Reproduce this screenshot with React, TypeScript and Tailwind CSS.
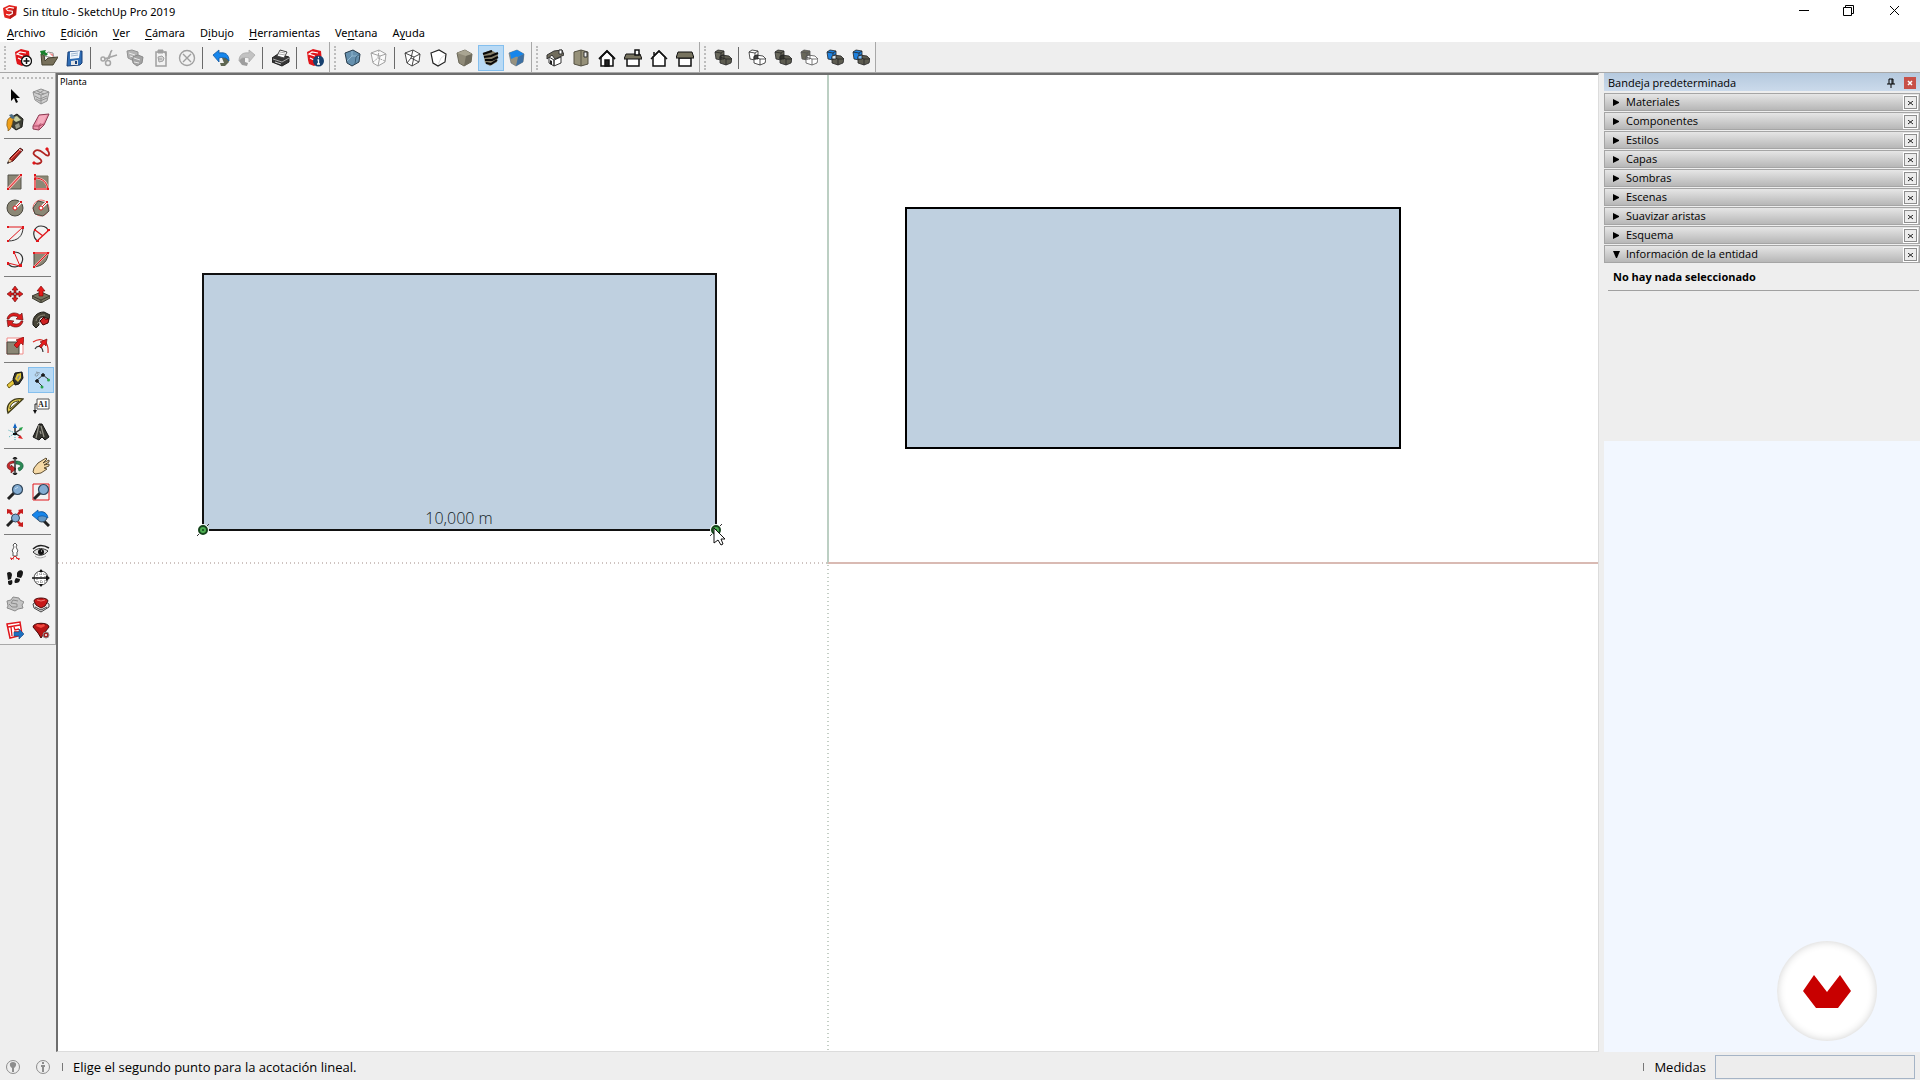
import React, { useState } from 'react';

const RED = '#e0161b';
const DARK = '#262626';
const OLIVE = '#8b8775';
const BLUE = '#1e82e0';

const CUBE = '1,4 9,1 16,5 15,13 8,17 3,14';

const Glyph = ({ children, size = 18 }) => (
  <svg width={size} height={size} viewBox="0 0 18 18" fill="none" aria-hidden="true">
    {children}
  </svg>
);

const Logo = () => (
  <g>
    <path d="M0 4l8-4 10 2-1 11-8 5-7-2-1-4z" fill="#e3241f" />
    <path d="M17 3l-1 10-7 5V8z" fill="#b91a17" />
    <path d="M14 4L8 3 4 5l2 2 6 1v3l-4 2-4-1" stroke="#fff" strokeWidth="1.4" />
  </g>
);

// two overlapping blocks, shared by the solid tools
const Solids = ({ back, front, line = DARK, core = 'none' }) => (
  <g stroke={line} strokeWidth=".8" strokeLinejoin="round">
    <path d="M1 3l3-2 6 1v8l-3 1-5-1z" fill={back} />
    <path d="M6 8l2-2 7 1 3 3-1 4-5 2-6-2z" fill={front} />
    <path d="M1 3l6 1v7M7 4l3-2M6 8l6 2v6M12 10l6 0" />
    <path d="M6 7l4-1v4l-4 0z" fill={core} />
  </g>
);

const House = ({ children }) => (
  <g stroke="#111" strokeWidth="1.5" strokeLinejoin="miter">{children}</g>
);

const icons = {
  nuevo: (
    <>
      <path d="M1 3l6-3 8 2 1 11-8 4-5-2-1-4z" fill={RED} />
      <path d="M12 4L6 3 3 5l6 2M4 9l4 2" stroke="#fff" strokeWidth="1.2" />
      <circle cx="12.5" cy="12" r="5" fill="#fff" stroke="#111" strokeWidth="1.3" />
      <path d="M12.5 9v6M9.5 12h6" stroke="#111" strokeWidth="1.5" />
    </>
  ),
  abrir: (
    <>
      <path d="M4 7l4-4 5 1 1 5z" fill="#fff" stroke="#999" />
      <path d="M9 4l4 1v3z" fill="#ee8c8c" />
      <path d="M1 5l1 11 11 0 5-8-10 1-3 3-1-6z" fill="#77705b" stroke="#45412f" />
      <path d="M0 2l6-1-1 2 3 2-2 2-3-2-1 2z" fill="#18812d" />
    </>
  ),
  guardar: (
    <>
      <path d="M2 3l14-1v12l-2 2L1 17z" fill="#2f6db5" stroke="#173f78" />
      <path d="M4 3l10-1-1 7-9 1z" fill="#f1f6fc" />
      <path d="M5 5l7-1M5 7l7-1" stroke="#9fb7d0" />
      <path d="M5 12l7-1v5l-7 0z" fill="#e4e4e4" />
      <path d="M9 12h2v3H9z" fill="#173f78" />
    </>
  ),
  cortar: (
    <g stroke="#a6a6a6" strokeWidth="1.5">
      <path d="M12 1L7 11M17 6L4 10M11 2l-2 8" />
      <circle cx="3" cy="10" r="2" />
      <circle cx="8" cy="14" r="2.5" />
    </g>
  ),
  copiar: (
    <>
      <path d="M1 2l5-1 6 2v5l-4 4-6-3z" fill="#b3b3b3" stroke="#929292" />
      <path d="M6 8l6-2 5 2-1 6-5 3-4-3z" fill="#a3a3a3" stroke="#8b8b8b" />
      <path d="M3 4l6 2M8 9l6 2M8 13l5 1M4 7l3 1" stroke="#e8e8e8" />
    </>
  ),
  pegar: (
    <g stroke="#a0a0a0">
      <path d="M4 3h10v14H4z" strokeWidth="1.5" />
      <path d="M6 1h5v3H6zM12 3h2v4" fill="#a0a0a0" />
      <path d="M6 8l4-1 2 2-1 3-4 1zM6 10l4 0" fill="#d6d6d6" />
    </g>
  ),
  borrar: (
    <g stroke="#a0a0a0" strokeWidth="1.4">
      <circle cx="9" cy="9" r="7.5" />
      <path d="M5 5l8 8M13 5l-8 8" />
    </g>
  ),
  deshacer: (
    <>
      <path d="M10 9l6 0 1 4-4 4-4 0-1-3 4 0z" fill="#5e6652" />
      <path d="M1 6l6-5v3c6-1 10 1 10 8-3-4-6-4-10-3v4z" fill="#1686ec" stroke="#0f579f" strokeWidth=".8" />
    </>
  ),
  rehacer: (
    <>
      <path d="M2 9l5 0 0 4 3 1-1 3-5-1-3-4z" fill="#9d9d9d" />
      <path d="M17 6l-6-5v3C5 3 1 6 1 12c3-4 6-4 10-3v4z" fill="#c2c2c2" stroke="#a9a9a9" strokeWidth=".8" />
    </>
  ),
  imprimir: (
    <>
      <path d="M0 9l6-4 11 3v5l-7 4-10-4z" fill="#363636" stroke="#1d1d1d" />
      <path d="M5 7l3-6 7 2-3 6z" fill="#fff" stroke="#444" />
      <path d="M7 5l6 1M8 3l5 1" stroke="#aaa" />
      <path d="M1 10l9 3 7-4" stroke="#aaa" />
      <path d="M3 13l6 2" stroke="#ccc" />
    </>
  ),
  info: (
    <>
      <path d="M1 3l6-3 8 2 1 11-8 4-5-2-1-4z" fill={RED} />
      <path d="M12 4L6 3 3 5l6 2M4 9l4 2" stroke="#fff" strokeWidth="1.2" />
      <circle cx="12.5" cy="12" r="5.5" fill="#17416f" />
      <path d="M11.500 11h1v4M11 15h3M12 8.500h1" stroke="#fff" strokeWidth="1.3" />
    </>
  ),
  rayosX: (
    <>
      <polygon points={CUBE} fill="#6590ae" stroke="#263b4b" />
      <path d="M3 12l5-5 7 0M8 2v5" stroke="#8fb6cf" />
      <path d="M12 8l4-3M12 8l-1 7" stroke="#3c6079" />
    </>
  ),
  aristas: (
    <g stroke="#a2a2a2">
      <polygon points={CUBE} fill="#fafafa" />
      <path d="M1 4l9 3 6-2M10 7l-2 10" />
      <path d="M3 13l5-4 7 3M9 1L8 9" strokeDasharray="2 1" />
    </g>
  ),
  alambre: (
    <g stroke="#333" strokeWidth=".9">
      <polygon points={CUBE} fill="#fff" />
      <path d="M1 4l9 4 6-3M10 8l-2 9M3 14l4-5 8 4M9 1L7 9" />
    </g>
  ),
  ocultas: (
    <>
      <polygon points={CUBE} fill="#fff" stroke="#222" strokeWidth="1.2" />
      <path d="M15 6l-4 3-3 7" stroke="#ddd" />
    </>
  ),
  sombreado: (
    <>
      <polygon points={CUBE} fill="#8f8a78" stroke="#6b6859" />
      <path d="M1 4l9 3 6-2-7-4z" fill="#a9a592" />
      <path d="M10 7l6-2-1 8-7 4z" fill="#6f6b5c" />
    </>
  ),
  texturas: (
    <>
      <polygon points={CUBE} fill="#847e68" />
      <path d="M1 5l9-3M2 8l7-1 7-3M3 11l7 0 6-3M4 14l5 1 6-4" stroke="#080808" strokeWidth="2" />
    </>
  ),
  mono: (
    <>
      <polygon points={CUBE} fill="#96917f" stroke="#5d6a74" strokeWidth=".6" />
      <path d="M1 4l8-3 7 4-6 3z" fill="#1686ec" />
      <path d="M2 4l12 1-11 5z" fill="#1686ec" />
      <path d="M10 8l6-3-1 8-7 4z" fill="#3d70a3" />
    </>
  ),
  iso: (
    <>
      <path d="M3 8l5 3v6l-5-3zM8 11l7-3v6l-7 3z" fill="#fff" stroke="#333" />
      <path d="M1 6l7-4 8-1 2 5-9 4-3-4-5 4z" fill="#716d5d" stroke="#333" />
      <path d="M13 1h3v4h-3z" fill="#fff" stroke="#333" />
      <path d="M4 11l2 1v4l-2-1z" fill="#222" />
    </>
  ),
  planta: (
    <>
      <path d="M2 3l7-2 7 2v12l-7 2-7-2z" fill="#969179" stroke="#545143" />
      <path d="M9 1v16" stroke="#545143" />
      <path d="M12 3h3v5h-3z" fill="#f3f3f3" stroke="#333" />
    </>
  ),
  frente: (
    <House>
      <path d="M3 8l6-6 6 6v9H3z" fill="#fff" />
      <path d="M1 10l8-8 8 8" strokeWidth="1.8" />
      <path d="M7 11h4v6H7z" fill="#222" />
    </House>
  ),
  derecha: (
    <House>
      <path d="M3 9h12v8H3z" fill="#fff" />
      <path d="M2 5h14l2 5H0z" fill="#77735f" strokeWidth="1" />
      <path d="M11 1h4v5h-4z" fill="#fff" />
    </House>
  ),
  detras: (
    <House>
      <path d="M3 8l6-6 6 6v9H3z" fill="#fff" />
      <path d="M1 10l8-8 8 8M4 6V3" />
    </House>
  ),
  izquierda: (
    <House>
      <path d="M3 9h12v8H3z" fill="#fff" />
      <path d="M2 3h14l2 6H0z" fill="#77735f" strokeWidth="1" />
    </House>
  ),
  envoltura: <Solids back="#68675a" front="#5d5c50" />,
  interseccion: <Solids back="#fff" front="#fff" core="#444" />,
  union: <Solids back="#68675a" front="#5d5c50" core="#33332c" />,
  sustraer: <Solids back="#68675a" front="#fff" line="#555" />,
  recortar: <Solids back={BLUE} front="#5d5c50" core="#d9e6ef" />,
  dividir: <Solids back={BLUE} front="#5d5c50" core="#7ec0ff" />,

  seleccionar: <path d="M5 2v12l3-3 2 5 2-1-2-4h4z" fill="#050505" />,
  componente: (
    <g stroke="#929292">
      <path d="M1 5l8-3 8 3-2 9-6 3-6-4z" fill="#cfcfcf" />
      <path d="M1 5l8 3 8-3M9 8v9M5 4l7 3M12 3L6 7M3 9l5 3 7-3M4 12l4 2 7-3" />
    </g>
  ),
  pintar: (
    <>
      <path d="M4 5l7-4 6 5-1 8-6 3-5-4z" fill="#3d3f35" stroke="#1c1c17" />
      <path d="M5 5l6-2 4 4-5 2z" fill="#c8cfa0" />
      <path d="M9 12l4-2 1 4-4 2z" fill="#9b9c8c" />
      <path d="M1 10c0-5 4-7 7-5-2 3-1 10-6 13 1-3-2-4-1-8z" fill="#f0a11c" stroke="#7a5514" strokeWidth=".7" />
      <path d="M3 2l3-1 3 4-3 1z" fill="#4a6d85" />
    </>
  ),
  borrador: (
    <>
      <path d="M1 13L7 2l10-1-5 11-5 5-6-1z" fill="#ed8fa8" stroke="#8a3950" />
      <path d="M1 13l6 0 5-2M7 13v4M7 13l6-9" stroke="#a94c65" />
      <path d="M7 3l8-1-4 8-6 1z" fill="#f5adbf" />
    </>
  ),
  linea: (
    <>
      <path d="M2 16l2-5L14 1l3 2L7 14z" fill="#b5231f" stroke="#4d1714" />
      <path d="M2 16l1-4 3 2z" fill="#e5c99c" />
      <path d="M1 17l2-1-1-2z" fill="#111" />
      <path d="M5 12L14 3" stroke="#e77a6c" />
      <path d="M13 2l3 2" stroke="#ddd" />
    </>
  ),
  manoAlzada: (
    <>
      <path d="M2 16c5 2 10-1 6-4s-9-5-5-8 8 2 11 4 4-1 2-4l-1-2" stroke="#b02522" strokeWidth="1.8" />
      <path d="M1 15h2v2H1zM14 1h2v2h-2z" stroke={RED} fill={RED} />
    </>
  ),
  rectangulo: (
    <>
      <path d="M2 2h13v14H2z" fill={OLIVE} stroke="#55534a" />
      <path d="M2 16L15 2" stroke="#f7b4b0" strokeWidth="3" />
      <path d="M2 16L15 2" stroke={RED} />
      <path d="M1 15h2v2H1zM14 1h2v2h-2z" fill={RED} />
    </>
  ),
  rectRotado: (
    <>
      <path d="M3 3h13v13H3z" fill={OLIVE} stroke="#77735f" />
      <path d="M3 2v14h13M3 5c8 0 12 5 13 11" stroke="#fbc3c0" strokeWidth="2" />
      <path d="M3 2v14h13M3 5c8 0 12 5 13 11" stroke={RED} />
      <path d="M2 1h2v2H2zM2 5h2v2H2zM2 15h2v2H2zM15 15h2v2h-2z" fill={RED} />
    </>
  ),
  circulo: (
    <>
      <circle cx="9" cy="9" r="8" fill={OLIVE} stroke="#4a483f" />
      <path d="M9 9l6-6" stroke="#fff" strokeWidth="3" />
      <path d="M9 9l6-6" stroke={RED} />
      <circle cx="9" cy="9" r="2" fill="#fff" stroke={RED} />
      <path d="M14 2h2v2h-2z" fill={RED} />
    </>
  ),
  poligono: (
    <>
      <circle cx="9" cy="9" r="8" stroke="#ef7470" />
      <path d="M1 9l5-7 9 2 2 8-6 5-8-2z" fill={OLIVE} stroke="#4a483f" />
      <path d="M9 9l6-6" stroke="#fff" strokeWidth="3" />
      <path d="M9 9l6-6" stroke={RED} />
      <circle cx="9" cy="9" r="2" fill="#fff" stroke={RED} />
      <path d="M14 2h2v2h-2z" fill={RED} />
    </>
  ),
  arco: (
    <>
      <path d="M17 2c0 9-5 14-15 14" stroke="#333" />
      <path d="M2 2h15L2 16" stroke={RED} />
      <path d="M1 1h2v2H1zM16 1h2v3h-2zM1 15h2v2H1z" fill={RED} />
    </>
  ),
  arco2: (
    <>
      <path d="M5 16C-1 10 2 1 9 1c5 0 7 3 7 5" stroke="#333" strokeWidth="1.2" />
      <path d="M5 16L17 5M3 5l8 6" stroke={RED} strokeWidth="1.3" />
      <path d="M4 15h3v2H4zM15 4h3v2h-3zM2 4h2v2H2z" fill={RED} />
    </>
  ),
  arco3: (
    <>
      <path d="M8 1c7 0 10 5 8 10s-9 7-14 2" stroke="#333" strokeWidth="1.2" />
      <path d="M8 1l6 14M2 12l12 3" stroke={RED} strokeWidth="1" />
      <path d="M7 0h2v3H7zM1 11h2v3H1zM13 13h3v3h-3z" fill={RED} />
    </>
  ),
  sector: (
    <>
      <path d="M2 2h14c0 8-5 13-14 14z" fill={OLIVE} stroke="#4a483f" />
      <path d="M2 2h14L2 16" stroke="#f5aaa6" strokeWidth="2" />
      <path d="M2 2h14L2 16" stroke={RED} />
      <path d="M1 1h2v2H1zM15 1h2v2h-2zM1 15h2v2H1z" fill={RED} />
    </>
  ),
  mover: (
    <g fill="#e51c1c" stroke="#5d0b0b" strokeWidth=".6">
      <path d="M9 1l3 4h-2v3H8V5H6zM9 17l-3-4h2v-3h2v3h2zM1 9l4-3v2h3v2H5v2zM17 9l-4 3v-2h-3V8h3V6z" />
    </g>
  ),
  empujar: (
    <>
      <path d="M0 11l9-4 9 4v2l-9 5-9-5z" fill="#76735f" stroke="#3b3a31" />
      <path d="M0 11l9 4 9-4M9 15v3" stroke="#3b3a31" />
      <path d="M9 1l4 5-2 0v5H7V6H5z" fill="#e51c1c" stroke="#700" strokeWidth=".6" />
    </>
  ),
  rotar: (
    <g fill="#dc1c1c" stroke="#5d0b0b" strokeWidth=".6">
      <path d="M1 8C2 2 9 0 14 4l2-2 1 7-7-1 2-2C8 4 4 5 3 8z" />
      <path d="M17 10c-1 6-8 8-13 4l-2 2-1-7 7 1-2 2c4 2 8 1 9-2z" />
    </g>
  ),
  sigueme: (
    <>
      <path d="M1 14C0 6 5 1 12 1l6 3-1 4-5-2c-4 0-6 2-5 8l-3 3z" fill="#474438" stroke="#1e1d18" />
      <path d="M4 10c1-4 4-6 9-6M5 13l3-3" stroke="#908d7c" />
      <path d="M8 10l4-4 1 2 4 0-1 4-5 2z" fill="#cf2222" stroke="#400" />
    </>
  ),
  escala: (
    <>
      <path d="M1 1h16v16H1z" fill="#fff" stroke="#f08b88" />
      <path d="M1 5h12v12H1z" fill={OLIVE} stroke="#4a483f" />
      <path d="M8 8l4-4-2-1 8-3-1 8-2-2-4 5z" fill="#e51c1c" stroke="#700" strokeWidth=".6" />
    </>
  ),
  equidistancia: (
    <>
      <path d="M1 5c9-6 16 0 15 11" stroke="#df2925" strokeWidth="1.2" />
      <path d="M3 12c2-4 7-4 8 3" stroke="#333" strokeWidth="1.2" />
      <path d="M7 9l3-3-2-1 7-3-1 7-2-2-3 4z" fill="#e51c1c" stroke="#700" strokeWidth=".6" />
    </>
  ),
  medir: (
    <>
      <path d="M1 14l6-5 2 3-6 5z" fill="#e8c93b" stroke="#6e5c14" />
      <path d="M7 8l2-6 7-1 1 6-4 6-4 1z" fill="#35352f" stroke="#111" />
      <path d="M9 8l2-5 4-1 0 5-3 4z" fill="#e3c736" />
      <path d="M11 7l2-3 1 1-2 4z" fill="#8e8d86" />
    </>
  ),
  acotar: (
    <>
      <path d="M4 10l7-6M5 10l5 5M11 4l5 4" stroke="#333" />
      <path d="M3 10h4M5 8v4M9 4h4M11 2v4" stroke="#111" strokeWidth="1.3" />
      <path d="M3 4c1-3 4-2 3 0s-3 1-3 0M4 1l4 1" stroke="#8a9aa5" />
      <circle cx="10" cy="16" r="1.5" fill="#27a34a" />
      <circle cx="16.5" cy="9" r="1.5" fill="#27a34a" />
    </>
  ),
  transportador: (
    <>
      <path d="M2 16C-1 7 7 0 17 2z" fill="#e2cd54" stroke="#3e3917" strokeWidth="1.3" />
      <path d="M4 12c0-5 4-8 9-8z" fill="#f4f4f4" stroke="#3e3917" />
    </>
  ),
  texto: (
    <>
      <path d="M5 2h12v10H5z" fill="#fff" stroke="#555" />
      <text x="6" y="10" fontSize="8" fontFamily="Liberation Serif, serif" fontWeight="700" fill="#222">A1</text>
      <path d="M5 7H3v6" stroke="#222" />
      <path d="M1 13h4l-2 4z" fill="#111" />
    </>
  ),
  ejes: (
    <>
      <path d="M9 10V2M9 10l6-4M9 10l6 4" strokeWidth="1.5" stroke="#333" />
      <path d="M9 0l2 5H7z" fill="#1166c4" />
      <path d="M17 4l-2 4-2-3z" fill="#27a34a" />
      <path d="M17 16l-5-1 2-3z" fill="#d22" />
      <path d="M9 10L2 7M9 10l-6 4M9 10v7" stroke="#3ba7b3" strokeDasharray="1 1" />
      <path d="M7 10h4v2H7z" fill="#111" />
    </>
  ),
  texto3d: (
    <>
      <path d="M7 1l3 0 7 13-4 3-3-3-3 3-6-3z" fill="#35352f" stroke="#111" />
      <path d="M7 2L4 15M9 3l3 11M8 8l1 3" stroke="#96948a" strokeWidth="1.2" />
    </>
  ),
  orbitar: (
    <>
      <path d="M8 4C0 4-1 12 5 13v3l5-4-5-4v2c-3-1-1-4 3-4z" fill="#c8282a" stroke="#511" strokeWidth=".6" />
      <path d="M10 4c9 0 9 8 3 10l-1-3c4-1 3-4-2-4z" fill="#2b8a56" stroke="#153" strokeWidth=".6" />
      <path d="M9 0v18M7 2l2-2 2 2M7 16l2 2 2-2" stroke="#222" strokeWidth="1.4" />
    </>
  ),
  mano: (
    <path d="M2 11l4-5 8-5 1 1-4 4 6-3 0 2-5 3 5-1 0 2-5 2 3 1-6 4-6 1-2-2z" fill="#f5d9a6" stroke="#4b3c22" strokeWidth=".9" />
  ),
  zoom: (
    <>
      <path d="M2 16l6-6" stroke="#222" strokeWidth="3" />
      <circle cx="11.5" cy="6.5" r="5" fill="#83acd2" stroke="#30465a" strokeWidth="1.2" />
      <path d="M9 6l3-2" stroke="#c7def0" />
    </>
  ),
  zoomVentana: (
    <>
      <path d="M1 1h16v16H1z" stroke={RED} strokeWidth="1" />
      <path d="M2 16l6-6" stroke="#222" strokeWidth="3" />
      <circle cx="11.5" cy="6.5" r="5" fill="#83acd2" stroke="#30465a" strokeWidth="1.2" />
    </>
  ),
  zoomExtension: (
    <>
      <path d="M1 17l7-7" stroke="#222" strokeWidth="3" />
      <circle cx="9.5" cy="9" r="4" fill="#83acd2" stroke="#30465a" />
      <path d="M1 0l5 1-1 1 2 3-2 1-2-2-2 1zM17 0l-5 1 1 1-2 3 2 1 2-2 2 1zM17 18l-5-1 1-1-2-3 2-1 2 2 2-1z" fill="#c81d1d" />
    </>
  ),
  zoomPrevio: (
    <>
      <path d="M11 11l6 6" stroke="#222" strokeWidth="3" />
      <circle cx="10" cy="8" r="5" fill="#6397c5" stroke="#30465a" />
      <path d="M0 6l6-5v2c6-1 9 1 10 6-3-2-6-3-10-1v3z" fill="#1686ec" stroke="#0f579f" strokeWidth=".8" />
    </>
  ),
  camara: (
    <>
      <path d="M9 0l2 2-1 2 2 4-1 1v4H7V9L6 8l2-4-1-2z" fill="#fff" stroke="#444" strokeWidth=".9" />
      <path d="M9 13l-4 4M9 13l4 4M4 15l4 1M10 15l4 1" stroke="#d22" />
    </>
  ),
  girar: (
    <>
      <path d="M1 6c5-5 11-4 16-1" stroke="#222" strokeWidth="1.5" />
      <path d="M1 9c5-5 10-4 15-1-4 5-10 6-15 1z" fill="#ddd" stroke="#333" />
      <circle cx="9" cy="9" r="3" fill="#111" />
      <path d="M3 13c3 3 8 2 11 0" stroke="#aaa" />
      <path d="M9 8h1" stroke="#fff" />
    </>
  ),
  caminar: (
    <g fill="#181818">
      <path d="M1 4c2-2 5-1 5 2l-1 4-3 1zM2 12l4-1c1 3 0 5-2 5s-2-2-2-4z" />
      <path d="M11 4c1-3 5-4 6-1 0 3-1 4-2 6l-4-1zM10 9l4 1c0 3-2 4-4 4s-2-2 0-5z" />
    </g>
  ),
  seccion: (
    <>
      <circle cx="9" cy="9" r="7" fill="#fff" stroke="#444" />
      <path d="M9 1v16M5 5h8v8H5z" stroke="#777" strokeDasharray="1 1" />
      <path d="M0 9h16" stroke="#111" strokeWidth="1.5" />
      <path d="M14 6l4 3-4 3zM9 0l2 3H7zM9 18l-2-3h4z" fill="#111" />
    </>
  ),
  almacen: (
    <>
      <path d="M1 6l4-1 2-3 6 1 1 2 4 2-2 3 1 3-5 1-3 2-5-2-3-1 1-2z" fill="#c4c4c4" stroke="#8b8b8b" />
      <path d="M12 6L7 5 5 8l6 1v3l-5 0M3 9l3 3" stroke="#8b8b8b" />
    </>
  ),
  extensiones: (
    <>
      <path d="M1 9l3-2h10l3 2v3l-8 5-7-4z" fill="#e9e9e9" stroke="#444" />
      <path d="M2 6c0-4 14-4 14 0l-3 5-4 2-5-3z" fill="#c71919" stroke="#510b0b" />
      <path d="M5 5l4 1 4-1" stroke="#f57d74" />
      <path d="M3 12l6 3 6-3" stroke="#444" />
    </>
  ),
  layout: (
    <>
      <path d="M1 3l13-2 2 13-12 3z" fill="#fff" stroke={RED} strokeWidth="1.5" />
      <path d="M2 6l12-2M5 6l1 9M8 6l1 3 4-1M8 11h5" stroke={RED} strokeWidth="1.3" />
      <path d="M8 11h5V8l5 5-5 5v-3H8z" fill="#1d6fc0" stroke="#154a80" strokeWidth=".6" />
    </>
  ),
  gestor: (
    <>
      <path d="M1 6c0-5 16-5 16 0l-4 5-4 6-3-5z" fill="#b81515" stroke="#470707" />
      <path d="M5 3l4 1 3-1 1 2-4 2-5-2z" fill="#f0483e" />
      <circle cx="14" cy="14" r="3" fill="#a52020" stroke="#8b8b8b" />
      <circle cx="14" cy="14" r="1" fill="#fff" />
    </>
  ),
};

// null marks a separator
const toolbars = [
  ['nuevo', 'abrir', 'guardar', null, 'cortar', 'copiar', 'pegar', 'borrar', null, 'deshacer', 'rehacer', null, 'imprimir', null, 'info'],
  ['rayosX', 'aristas', null, 'alambre', 'ocultas', 'sombreado', 'texturas', 'mono'],
  ['iso', 'planta', 'frente', 'derecha', 'detras', 'izquierda'],
  ['envoltura', null, 'interseccion', 'union', 'sustraer', 'recortar', 'dividir'],
];

const toolGroups = [
  ['seleccionar', 'componente', 'pintar', 'borrador'],
  ['linea', 'manoAlzada', 'rectangulo', 'rectRotado', 'circulo', 'poligono', 'arco', 'arco2', 'arco3', 'sector'],
  ['mover', 'empujar', 'rotar', 'sigueme', 'escala', 'equidistancia'],
  ['medir', 'acotar', 'transportador', 'texto', 'ejes', 'texto3d'],
  ['orbitar', 'mano', 'zoom', 'zoomVentana', 'zoomExtension', 'zoomPrevio'],
  ['camara', 'girar', 'caminar', 'seccion', 'almacen', 'extensiones', 'layout', 'gestor'],
];

// text before, underlined letter, text after
const menus = [
  ['', 'A', 'rchivo'],
  ['', 'E', 'dición'],
  ['', 'V', 'er'],
  ['', 'C', 'ámara'],
  ['D', 'i', 'bujo'],
  ['', 'H', 'erramientas'],
  ['Ve', 'n', 'tana'],
  ['A', 'y', 'uda'],
];

const panels = ['Materiales', 'Componentes', 'Estilos', 'Capas', 'Sombras', 'Escenas', 'Suavizar aristas', 'Esquema', 'Información de la entidad'];

const ToolButton = ({ name, active, onClick }) => (
  <button
    type="button"
    aria-label={name}
    aria-pressed={active}
    onClick={onClick}
    className={`flex h-[26px] w-[26px] shrink-0 items-center justify-center border ${
      active ? 'border-[#84bfee] bg-[#b9daf5]' : 'border-transparent hover:bg-[#dcebf8]'
    }`}
  >
    <Glyph>{icons[name]}</Glyph>
  </button>
);

const Snap = ({ x, y }) => (
  <g>
    <circle cx={x} cy={y} r="6" fill="#fff" />
    <path d={`M${x - 6} ${y + 6}l2-2M${x + 4} ${y - 4}l2-2`} stroke="#333" strokeWidth="1" />
    <circle cx={x} cy={y} r="4" fill="#4cae50" stroke="#15451c" strokeWidth="2" />
    <circle cx={x} cy={y} r="1" fill="#15451c" />
  </g>
);

const Viewport = () => (
  <div className="relative min-w-0 flex-1 border-2 border-r border-b border-[#6e6e6e] border-r-[#dcdcdc] border-b-[#dcdcdc] bg-white">
    <svg className="absolute inset-0 h-full w-full" fill="none">
      <path d="M770 0v489" stroke="#bccfc3" strokeWidth="2" />
      <line x1="770" y1="488" x2="100%" y2="488" stroke="#d9bab3" strokeWidth="2" />
      <path d="M0 488h770" stroke="#cfc4c1" strokeWidth="2" strokeDasharray="1 3" />
      <line x1="770" y1="490" x2="770" y2="100%" stroke="#c3cec4" strokeWidth="2" strokeDasharray="1 3" />
      <rect x="848" y="133" width="494" height="240" fill="#bfd0e0" stroke="#000" strokeWidth="2" />
      <rect x="145" y="199" width="513" height="256" fill="#bfd0e0" stroke="#111" strokeWidth="2" />
      <text x="401" y="449" textAnchor="middle" className="fill-[#141d26] font-['Open_Sans',sans-serif] text-[16px] font-light">
        10,000 m
      </text>
      <Snap x={145} y={455} />
      <Snap x={658} y={455} />
      <path d="M656 453v15l4-3 3 5 2-1-2-5h4z" fill="#fff" stroke="#111" strokeWidth="1" />
    </svg>
    <span className="relative block pl-[2px] font-['Noto_Sans',sans-serif] text-[9px] leading-[14px] text-black">Planta</span>
  </div>
);

const Tray = () => {
  const [open, setOpen] = useState('Información de la entidad');

  return (
    <aside className="flex w-[316px] shrink-0 flex-col">
      <div className="flex h-[18px] items-center bg-gradient-to-b from-[#b5c9de] to-[#cbdaeb] pt-px pr-1 pl-1">
        <h2 className="flex-1">Bandeja predeterminada</h2>
        <button type="button" aria-label="Fijar" className="mr-[9px]">
          <svg width="8" height="10" viewBox="0 0 8 10" fill="none" className="block">
            <path d="M2 6V1h4v5M5 1v5M0 6h8M4 6v4" stroke="#000" />
          </svg>
        </button>
        <button type="button" aria-label="Cerrar bandeja" className="flex h-3 w-3 items-center justify-center bg-[#c75048]">
          <svg width="6" height="6" viewBox="0 0 6 6" className="block">
            <path d="M1 1l4 4M5 1L1 5" stroke="#fff" strokeWidth="1.5" />
          </svg>
        </button>
      </div>
      <div className="mt-[2px] flex flex-col gap-px">
        {panels.map(name => (
          <div key={name} className="flex h-[18px] items-center border border-[#a5a5a5] bg-gradient-to-b from-[#e6e6e6] to-[#b7b7b7] pr-[2px]">
            <button type="button" aria-expanded={open === name} onClick={() => setOpen(open === name ? '' : name)} className="flex flex-1 items-center pl-2 text-left">
              <svg width="7" height="7" viewBox="0 0 7 7" className="mr-[6px] block">
                <path d={open === name ? 'M0 0h7L4 7H3z' : 'M0 0l6 3v1L0 7z'} fill="#000" />
              </svg>
              {name}
            </button>
            <button type="button" aria-label={`Cerrar ${name}`} className="flex h-[13px] w-[13px] items-end justify-center border border-[#8e8e8e] bg-[#ececec] pb-[2px] outline outline-1 outline-white">
              <svg width="5" height="5" viewBox="0 0 5 5" className="block">
                <path d="M0 0l5 4M5 0L0 4" stroke="#222" strokeWidth="1" />
              </svg>
            </button>
          </div>
        ))}
      </div>
      <div className="h-[178px]">
        <p className="mr-px ml-1 h-7 border-b border-[#a0a0a0] pl-[5px] text-[11px] leading-[28px] font-bold">No hay nada seleccionado</p>
      </div>
      <div className="flex flex-1 items-end justify-end bg-[#f2f7ff] pr-[43px] pb-[11px]">
        <div className="flex h-[100px] w-[100px] items-center justify-center rounded-full bg-white shadow-[inset_0_0_8px_#cfcfcf]">
          <svg width="48" height="33" viewBox="0 0 48 33">
            <path d="M11 0l13 17L37 0l11 16-13 17H13L0 16z" fill="#c80000" />
          </svg>
        </div>
      </div>
    </aside>
  );
};

const App = () => {
  const [style, setStyle] = useState('texturas');
  const [tool, setTool] = useState('acotar');

  return (
    <div className="flex min-h-screen flex-col bg-[#eeeeee] font-['Open_Sans','Noto_Sans',sans-serif] text-[11px] leading-[16px] text-black">
      <header className="bg-white font-['Noto_Sans','Open_Sans',sans-serif]">
        <div className="flex h-6 items-center pl-[3px]">
          <Glyph size={14}><Logo /></Glyph>
          <h1 className="ml-[6px] flex-1">Sin título - SketchUp Pro 2019</h1>
          <div className="flex pr-[2px] pb-1">
            <button type="button" aria-label="Minimizar" className="flex w-[46px] justify-center">
              <svg width="11" height="11" fill="none"><path d="M1 5.5h10" stroke="#000" /></svg>
            </button>
            <button type="button" aria-label="Restaurar" className="flex w-[45px] justify-center">
              <svg width="11" height="11" fill="none"><path d="M.5 2.5h8v8h-8zM2.5 2.5v-2h8v8h-2" stroke="#000" /></svg>
            </button>
            <button type="button" aria-label="Cerrar" className="flex w-[47px] justify-center">
              <svg width="11" height="11" fill="none"><path d="M1 1l9 9M10 1l-9 9" stroke="#000" /></svg>
            </button>
          </div>
        </div>
        <nav className="flex h-[18px] items-center gap-px">
          {menus.map(([before, key, after]) => (
            <button key={before + key + after} type="button" className="px-[7px]">
              {before}<u className="underline-offset-2">{key}</u>{after}
            </button>
          ))}
        </nav>
      </header>

      <div className="flex h-[31px] border-b border-[#a8a8a8]">
        {toolbars.map((bar, i) => (
          <div key={i} className="flex items-center border-r border-[#a8a8a8] bg-[#f2f2f2] pt-[2px] pr-px">
            <span className="mr-1 ml-1 h-6 w-[2px] border-l-2 border-dotted border-[#bdbdbd]" />
            {bar.map((name, j) => name ? (
              <ToolButton key={j} name={name} active={name === style} onClick={() => i === 1 && setStyle(name)} />
            ) : (
              <span key={j} className="mr-[5px] ml-[2px] h-[22px] w-px bg-[#6a6a6a]" />
            ))}
          </div>
        ))}
      </div>

      <main className="flex flex-1">
        <div className="w-14 shrink-0">
          <div className="border-r border-b border-[#a8a8a8] bg-[#f2f2f2] pt-1 pb-px pl-[2px]">
            <div className="mr-[2px] mb-1 border-t-2 border-dotted border-[#bdbdbd]" />
            {toolGroups.map((group, i) => (
              <div key={i} className={i ? 'mt-[3px] mr-1 ml-[2px] pt-[5px] shadow-[inset_0_1px_0_#7c7c7c]' : 'mr-1 ml-[2px]'}>
                <div className="-ml-[2px] grid grid-cols-[26px_26px]">
                  {group.map(name => (
                    <ToolButton key={name} name={name} active={name === tool} onClick={() => setTool(name)} />
                  ))}
                </div>
              </div>
            ))}
          </div>
        </div>
        <Viewport />
        <div className="w-[5px] shrink-0" />
        <Tray />
      </main>

      <footer className="flex h-7 items-center pt-px text-[13px]">
        <svg width="64" height="16" viewBox="0 0 64 16" fill="none" stroke="#8d8d8d">
          <circle cx="13" cy="8" r="6.5" />
          <path d="M13 3c4 0 4 4 1 6v4h-2V9c-3-2-3-6 1-6z" fill="#8d8d8d" stroke="none" />
          <circle cx="43" cy="8" r="6.5" />
          <path d="M43 3v2M43 6v7M41 7h4" strokeWidth="2" />
          <path d="M62.5 4v8" stroke="#777" />
        </svg>
        <p className="ml-[9px] flex-1">Elige el segundo punto para la acotación lineal.</p>
        <span className="mr-[10px] h-2 w-px bg-[#777777]" />
        <label htmlFor="medidas" className="mr-[9px]">Medidas</label>
        <input id="medidas" type="text" className="mr-[5px] h-6 w-[200px] border border-[#a5b4c6] bg-[#ededed] px-1" />
      </footer>
    </div>
  );
};

export default App;
